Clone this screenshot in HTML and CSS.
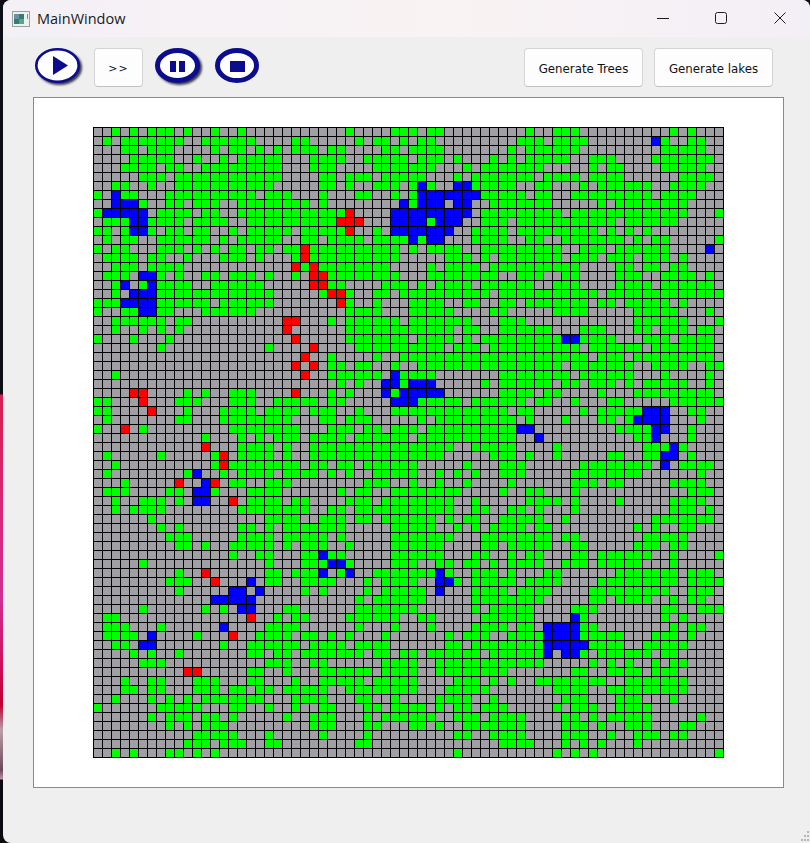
FILE: index.html
```html
<!doctype html>
<html lang="en">
<head>
    <meta charset="utf-8">
    <title>MainWindow</title>
    <link rel="stylesheet" href="styles.css">
</head>
<body>
    <div class="window">
        <div class="titlebar">
            <svg class="app-icon" width="18" height="16" viewBox="0 0 18 16">
                <rect x="0.5" y="0.5" width="17" height="15" fill="#eef0f0" stroke="#9a9fa2"/>
                <rect x="2" y="3" width="10" height="10" fill="#2f7f78"/>
                <rect x="2" y="3" width="5" height="5" fill="#6e8f9c"/>
                <rect x="7" y="8" width="5" height="5" fill="#5aa878"/>
                <rect x="15" y="3" width="1" height="5" fill="#5b9aa0"/>
            </svg>
            <span class="title">MainWindow</span>
            <div class="win-controls">
                <svg width="14" height="14" viewBox="0 0 14 14"><path d="M2 7.5H14" stroke="#1c1c1c" fill="none"/></svg>
                <svg width="14" height="14" viewBox="0 0 14 14"><rect x="1.5" y="1.5" width="11" height="11" rx="2" stroke="#1c1c1c" fill="none"/></svg>
                <svg width="14" height="14" viewBox="0 0 14 14"><path d="M1.5 1.5L12.5 12.5M12.5 1.5L1.5 12.5" stroke="#1c1c1c" fill="none"/></svg>
            </div>
        </div>

        <div class="toolbar">
            <svg class="round-btn round-btn-shadow" width="47" height="39" viewBox="0 0 47 39">
                <ellipse cx="22.5" cy="17.5" rx="21.2" ry="16.2" fill="#fff" stroke="#0c0c8e" stroke-width="2.6"/>
                <path d="M18 8L33 17.5L18 27Z" fill="#0c0c8e"/>
            </svg>
            <button class="btn btn-small">&gt;&gt;</button>
            <svg class="round-btn round-btn-shadow" width="48" height="39" viewBox="0 0 48 39">
                <ellipse cx="22.5" cy="17.5" rx="20" ry="15" fill="#fff" stroke="#0c0c8e" stroke-width="5"/>
                <rect x="15" y="13" width="6" height="11" fill="#0c0c8e"/>
                <rect x="24" y="13" width="6" height="11" fill="#0c0c8e"/>
            </svg>
            <svg class="round-btn" width="46" height="39" viewBox="0 0 46 39">
                <ellipse cx="22" cy="17.5" rx="19.5" ry="15" fill="#fff" stroke="#0c0c8e" stroke-width="5"/>
                <rect x="15" y="13" width="15" height="11" fill="#0c0c8e"/>
            </svg>
            <div class="spacer"></div>
            <button class="btn">Generate Trees</button>
            <button class="btn">Generate lakes</button>
        </div>

        <div class="frame">
            <div id="grid" class="grid"></div>
        </div>

        <div class="statusbar">
            <svg width="9" height="13" viewBox="0 0 9 13">
                <rect x="6" y="1" width="2" height="2" fill="#b5b5b5"/>
                <rect x="3" y="5" width="2" height="2" fill="#b5b5b5"/>
                <rect x="6" y="5" width="2" height="2" fill="#b5b5b5"/>
                <rect x="0" y="9" width="2" height="2" fill="#b5b5b5"/>
                <rect x="3" y="9" width="2" height="2" fill="#b5b5b5"/>
                <rect x="6" y="9" width="2" height="2" fill="#b5b5b5"/>
            </svg>
        </div>
    </div>

    <script src="grid.js"></script>
</body>
</html>
```

FILE: styles.css
```css
* {
    box-sizing: border-box;
}
html, body {
    margin: 0;
    height: 843px;
    overflow: hidden;
}
body {
    padding-left: 3px;
    background: linear-gradient(to bottom,
        #0e0e16 0, #0e0e16 394px,
        #d81f4f 395px, #d8287a 520px, #cf3090 600px, #d01060 660px,
        #c00030 705px, #b8a0a8 730px, #6a4a5a 770px, #c090a8 779px,
        #0a0a10 780px, #0a0a10 100%);
}
.window {
    display: flex;
    flex-direction: column;
    width: 807px;
    height: 843px;
    background-color: #efefef;
    border-radius: 8px 8px 0 8px;
    overflow: hidden;
}
.titlebar {
    display: flex;
    align-items: center;
    flex: none;
    height: 37px;
    padding-left: 9px;
    background: linear-gradient(to right, #f3f0f6, #f9f3f3 55%, #f3eff6);
}
.app-icon {
    flex: none;
}
.title {
    margin-left: 7px;
    font-family: "Open Sans", sans-serif;
    font-size: 14.5px;
    color: #1a1a1a;
}
.win-controls {
    display: flex;
    gap: 45px;
    margin-left: auto;
    margin-right: 23px;
    margin-bottom: 2px;
}
.toolbar {
    display: flex;
    align-items: flex-start;
    gap: 12px;
    flex: none;
    height: 60px;
    padding: 11px 37px 0 32px;
}
.round-btn {
    flex: none;
}
.round-btn-shadow {
    filter: drop-shadow(2px 2px 1px #3a3a48);
}
.spacer {
    flex: 1;
}
.btn {
    width: 119px;
    height: 39px;
    padding: 2px 0 0;
    background-color: #fdfdfd;
    border: 1px solid #d4d4d4;
    border-bottom-color: #c0c0c0;
    border-radius: 4px;
    font-family: "DejaVu Sans", sans-serif;
    font-size: 11.8px;
    color: #111;
}
.btn-small {
    width: 49px;
    flex: none;
    font-size: 11px;
    letter-spacing: 1px;
}
.toolbar .btn:last-child {
    margin-left: -1px;
}
.frame {
    display: flex;
    align-items: center;
    justify-content: center;
    flex: none;
    width: 751px;
    height: 691px;
    margin-left: 30px;
    background-color: #fff;
    border: 1px solid #8a8a8a;
}
.grid {
    display: grid;
    grid-template-columns: repeat(70, 8px);
    grid-auto-rows: 8px;
    gap: 1px;
    padding: 1px;
    background-color: #000;
}
.cell {
    background-color: #a0a0a4;
}
.cell-tree {
    background-color: #00ff00;
}
.cell-water {
    background-color: #0000ff;
}
.cell-fire {
    background-color: #ff0000;
}
.statusbar {
    display: flex;
    flex: 1;
    align-items: flex-end;
    justify-content: flex-end;
}
```

FILE: grid.js
```js
// G tree, B water, R fire, . empty
// map is kept in three blocks: columns 0-22, 23-46, 47-69
var left = [
    "..G.G.GGG.G..G..G......",
    ".G.GGGGGGG..GGGGGG....G",
    "...GG.GGG....G.GG.G.G.G",
    "....GGGGG..G..G.GGGGG..",
    "...GGGG.GG..GGGGGGGGG..",
    ".....GGG.GGGGGGGGGGGG..",
    "..GG..G..GGGGGGGGGGG...",
    "G.BGG...GGGGGGGGGG.GGG.",
    "..BBBG..GG.GGG..GGGGGGG",
    "GBBBBB.GGGG.GG..GGGGGGG",
    ".GGGBBGGGG.GGGG..GGGGGG",
    "GG.GBBG.GG.GG..G.GGGGG.",
    ".G.GG..GGGGGG.G.GGGGG..",
    "G.GG...GGG.G.G.GG.GG.GG",
    ".GGGG.GG..G...GGG.G...G",
    "..GGG.GGGG............R",
    ".GGG.BBG.G..GG.GGG.G..G",
    "..GB.GBGGGG..GGGGGG....",
    "..G.BBBGGGGGGGGGGGGG...",
    "GGGBBBBGGGGGG.GGGGGG...",
    "G..GGBBGG...GGGGGG.....",
    "..GGGGGG.GG..........RR",
    "..G..G.G.G...........R.",
    "G...G...G.............R",
    ".......G...........G...",
    ".......................",
    "......................R",
    "..G....................",
    ".......................",
    "....RR....G.G..GGG....R",
    "GG...R...GGG...GGG..GGG",
    "GG....R...G...GGGG.GGGG",
    ".G.......GG...GGGGGGGG.",
    "G..R.G.........GGGGGGGG",
    "............G...G.G.GGG",
    "............R...GGGG.G.",
    ".G.....G.....GR.GGGG.G.",
    "..G..........GRGGGGGGGG",
    ".G........GB..G.GGGG.GG",
    "...G.....R..BR.GG..GGG.",
    ".GGG....GG.BBG...GGGG..",
    "..G..GGG.G.BB..R.GGGG.G",
    "..G.GGGG........GGGGGGG",
    "......G............GGGG",
    ".......G.G......GG.G.GG",
    "........GGG.....GGGG.GG",
    ".........GG.G..GGGGG.G.",
    "...............G..GG...",
    ".....G.............G...",
    ".........G..R......GG.G",
    "........GGG..R...B.GG..",
    ".........G.....BB.B....",
    ".............BBBBB.....",
    ".....G......G.G.BB...GG",
    ".GG..............R..G.G",
    ".GGG...G......B....GGGG",
    ".GGGG.B....G...R..GGGG.",
    "..GG.BB.......G..GGGGGG",
    "....G.G..G.......GG.GG.",
    ".....GGG...........GGG.",
    "..........RR.....GG..G.",
    "...G..GG...GGG...GG...G",
    "...GG.GG...GGG.GG.GG.GG",
    "..G...G.G.G.GGGGGGG...G",
    "G......GGGGG...GG..G..G",
    "......G.GGG.GG.G.....G.",
    "........G.G.GGG........",
    "...........GGGGG...G...",
    "..........GGG.GGG..GG..",
    "..G.G...GG.G.G........."
];
var middle = [
    ".....G....GGG.GG........",
    "G.....G.GG.G.GG.........",
    "GG.GG....GG.GGGG.......G",
    ".GGGG..GGGGG.GGG.G...G.G",
    ".GGG....GGGGGGG...G.GGGG",
    "..GG.GGG.GGGGG...G.GGGGG",
    "..GG.G..GGG.GBG..BBGGGGG",
    "..G...GG..G.GBBBBBBBGGGG",
    "G.G........BGBBB.BB..GGG",
    "GGGGGR....BBBBBBBBB.GGGG",
    "GGGGRRR...BBBBGBBB..GGG.",
    "GGGGGR..G.BBBBBBB..GGGG.",
    "GG.GGGG.GGGGBGBB...GGGG.",
    "RGGGGGGGGGG.G.GGGG..GGGG",
    "RGGGGGGGGGG.....GGG.G.GG",
    "GRGGGGGGGG....G.GGGG.GGG",
    ".RRGGGGGGGG...GGGGGGGG..",
    ".RRGG....GGG.G.GGGG.GGGG",
    "..GRRG..GG.GGGGGGGGGG.GG",
    "....RG..G...GGGG..GG..GG",
    ".....GGGG...GGGGG....GG.",
    "...G.GGGGGG.GGGGGGG...GG",
    ".....GGGGGGGGGGGG.GG..GG",
    ".....GGGGGGG.GGGG.G.GGGG",
    ".R....GGGGGGGGGG.GGG.GGG",
    "R..G....G..GGGGGGGGGGGGG",
    ".R.GG.GG..G..GGGGGGGGGGG",
    "R..GGGGGG.BGGGG.......GG",
    "....G.G..BBGBBB.....G.GG",
    "...G.G...BGBBBBB......GG",
    "GG.GG.....BBBGGGGG.GGGGG",
    ".GGG..G...GGGGGGGGGGGGG.",
    "..GG.GGG.....G.GGGGGGGGG",
    "...GGG.GG.GGG.GGGGGGGGGG",
    ".GGGG.GGGGGG.GGGGGGGGGGG",
    ".GGGGGGGGGGGGGGGG..GGGGG",
    ".GGGGGGGGGGGGGGG.....GGG",
    ".GG.GG.GGGGGG.....G...GG",
    "GG.G.G..GGGGG..G.G.G..GG",
    ".......GGG..G..G..G....G",
    "....G.GG..GGGGGGGG....G.",
    "G....GGG.GGGGGGGG..G....",
    "G..GG.GGGGGGGGGGG..GG..G",
    "..GGG.GG.GGGGGG.G.GG..GG",
    "GGGGG.....GGGGG..G.G.GGG",
    "GGG.G.....GGGGGGG...GGGG",
    "GGG..G....GGGGGG....GG.G",
    "GGBGG.....GGGGGG...GG..G",
    "GGGBBG....GGG..GG.GG.G.G",
    "GGB.GB..GGGGGGGBG..GGG.G",
    "GGGG...G.GGGG..BBG.GGGGG",
    "G.G....G.GGGGG.B...GGGG.",
    "......G.GGGGGG.....GGGGG",
    "......GGGGGGG......G.GGG",
    "G....GGGGGG..GG.....GGGG",
    "......G...G...G....GGGG.",
    "GG.G.G...G......G.GGG..G",
    ".GGGG.GGGG......GG.GGGGG",
    "GGGGGGG.GG.GG.GGGGGG.GGG",
    ".GG......GGGG..GGGGGGGGG",
    "..GGGGGG.GGGG..GGGGGGGG.",
    "..GGGGG.GGGGG....GGG.G.G",
    "GGG..GGGGGGGG...GGGGG...",
    "GGG...GG..G....GGGG..G..",
    "..GG...GG.GGGG.G.GG.GGG.",
    ".GGG...G.GGGGGG..GGG.GGG",
    ".GGG...GG...GG.G..GGGGGG",
    "..G....G.........GG..GGG",
    "......GG..............GG",
    ".................G......"
];
var right = [
    ".G..GGG..........G.G...",
    "GGG.GGGG.......BG..GG..",
    ".GGGGGG.........GGGGG..",
    ".GGGGG..GGG....GGGGGGG.",
    "GGG.....G.GG....GGGGG..",
    "GG.GGGG.GGGG......GGGG.",
    "..GG...G.GGGGGG..GGGG..",
    "G.GG..GGGGGGGGG.GGGG...",
    "GGGG.....G.GGGGGGGG....",
    "GGGGG.GGGGGGGGGGGGG...G",
    "GGGGGGGGGGG.GGGGGG.....",
    "GGGGGGGGG.G.G.G........",
    ".GG..GGGGGGG.G.GG.....G",
    "GGGGG..GGG.GGGGGG....B.",
    "GGGGG.GGG.GGG.GGG.G....",
    "GGGGGGG....GG.GG.GG....",
    "GGG..GG....GGG..GGGG.G.",
    "GG..GGG....GGGG.GGGGGG.",
    "GGGGGGGGG.GGGGGGGGGGGGG",
    ".GGGGGGG.GG.GGGGG.G....",
    "....GGGG.....GGGGG...G.",
    "G............GGGGGG...G",
    "GGGG...GGG...GG.GGG.GG.",
    "GGGGGBBGGGG...GGG.GGGG.",
    "GGGGGGG.GGGGGG.GGGGGGG.",
    "GGGGGGGG.GGG.GGGGGGGGG.",
    "GGGGG.GGGGGGG..GGGG..GG",
    "GGGGGG.GGGGGG...G....G.",
    "GGGG.GG.GGG.G.GGGGG..G.",
    "GG.GG....G...GGGGGGGGG.",
    "G.GG..G...GG.....GGGGGG",
    "GG.....G.GGGGGBBB..GG..",
    ".G...G...GG.GBBBB...G..",
    "BB.........GGGGBB..G...",
    "..B..........GGB...G...",
    "....G.........GGGBG....",
    ".G..G.....GG..GGBB.G...",
    "G......GGGGGGGG.B.GGGG.",
    "G.....GGGGGGGG......G..",
    "......GGG.GG.....GGGG..",
    ".GG...G............GGG.",
    ".GGGG.G....G.....GGGG..",
    "G.G...G..........GGG.G.",
    "GGG..G.........GGGGGGG.",
    "G.GG.........G.G..GG...",
    "GGGG.GG.......GGGGG....",
    "GGGG..GG.....GGG.GG....",
    ".GG...GG.GGGGGG..G....G",
    "GGG..GGG.GGGGG...G.....",
    "...GG......GGGGGGG.GGG.",
    ".GGGG....GGGGGGGGG.GGGG",
    "GGGG....GGGGGGGGG..GGG.",
    "GGG.....GG.GGGG..G.GG..",
    "GG....GGG.......GG..GGG",
    "GG....BG........G.G....",
    "GG.BBBBGG........G.GG..",
    "GGGBBBBGGGGG...GGG.G...",
    "GGGBBBBBGGGG..GGGGG....",
    "GGGB.BBG.GGGGGG.GG.....",
    "GGG.....G.G.G..G.GG....",
    "......GG..GGGG.GGG.....",
    "..GGGGGGGG..GGGGGGG....",
    "....GGGG..GGGGGGGGG....",
    ".....GGG...GGG...G.....",
    "....G.GGG..GGGG........",
    "G....GG.G.GGGGG.....G..",
    "G....GGG.G..GGG...GG...",
    "G....GGG..G..GGG.GG....",
    "GG...G.G.G...G.........",
    "....G.G.G.............G"
];

var grid = document.getElementById('grid');
var classes = { G: 'cell-tree', B: 'cell-water', R: 'cell-fire' };

for (var row = 0; row < 70; row++) {
    var line = left[row] + middle[row] + right[row];
    for (var col = 0; col < 70; col++) {
        var cell = document.createElement('div');
        cell.classList.add('cell');
        var kind = line.charAt(col);
        if (classes[kind]) {
            cell.classList.add(classes[kind]);
        }
        grid.appendChild(cell);
    }
}
```
